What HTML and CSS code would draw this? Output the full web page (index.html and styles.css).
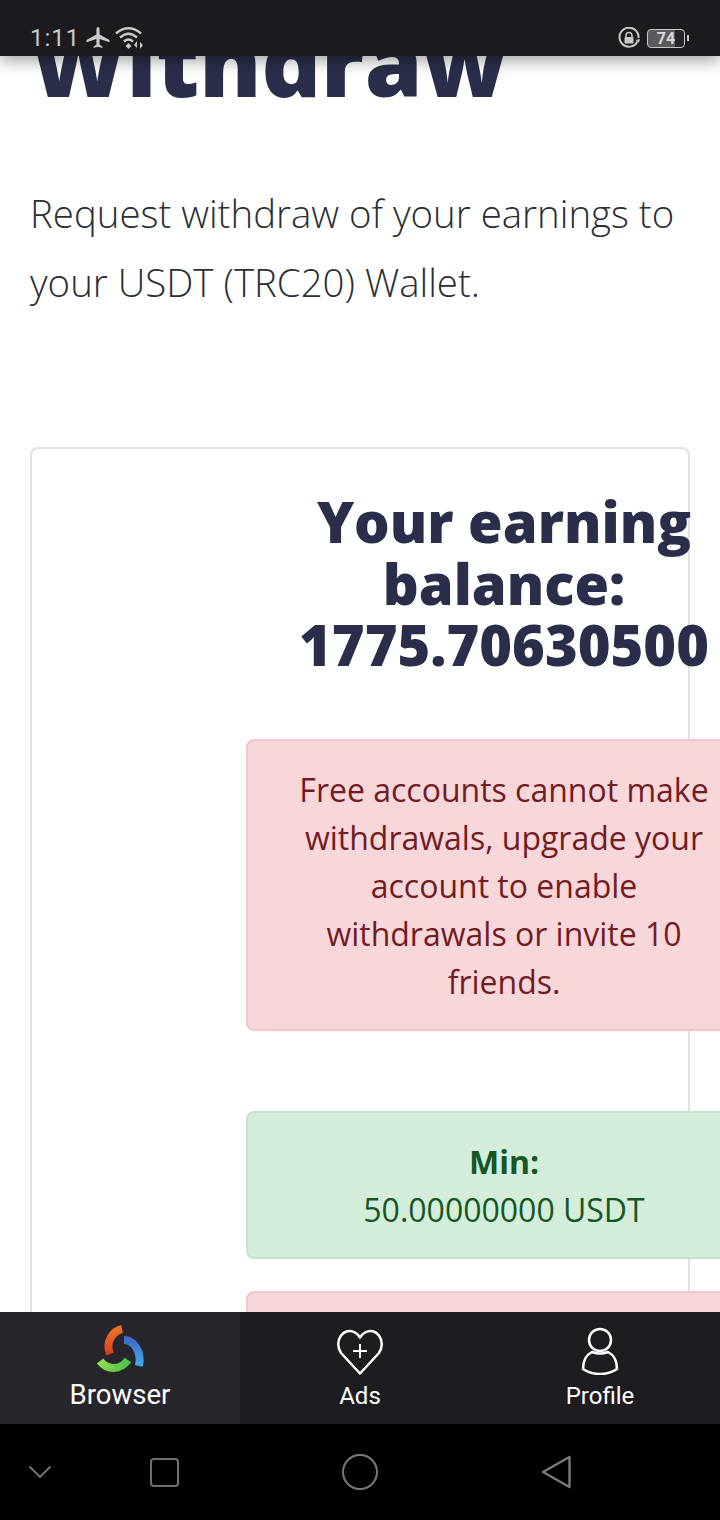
FILE: index.html
```html
<!DOCTYPE html>
<html lang="en">

<head>
    <meta charset="UTF-8">
    <meta name="viewport" content="width=device-width, initial-scale=1.0">
    <title>Withdraw</title>
    <link rel="stylesheet" href="styles.css">
</head>

<body>
    <div class="phone">
        <div class="statusbar">
            <div class="status-left">
                <span class="status-time">1:11</span>
                <svg class="icon-plane" width="24" height="22" viewBox="0 0 24 22">
                    <path d="M12 0c1 0 1.600 1.200 1.600 3v4.600L23.500 13v2.200l-9.900-3.100v5.400l2.800 2.200V21L12 19.800 7.600 21v-1.300l2.800-2.200v-5.400L.5 15.200V13l9.900-5.400V3C10.400 1.200 11 0 12 0z" fill="#c9c9c9"/>
                </svg>
                <svg class="icon-wifi" width="30" height="24" viewBox="0 0 30 24">
                    <path d="M1 7.500C8.500 .5 18.500 .5 26 7.500M5 11.500c5.500-5 11.500-5 17 0M9 15.500c3-2.700 6-2.700 9 0" fill="none" stroke="#c9c9c9" stroke-width="2.400"/>
                    <path d="M13.500 17l3 3-3 3-3-3z" fill="#c9c9c9"/>
                    <path d="M22 15v7l-3-3zM25 23v-7l3 3z" fill="#c9c9c9"/>
                </svg>
            </div>
            <div class="status-right">
                <svg class="icon-lock" width="22" height="22" viewBox="0 0 22 22">
                    <path d="M19.500 14.500A9.500 9.500 0 1 1 20.500 11" fill="none" stroke="#c9c9c9" stroke-width="2"/>
                    <path d="M17.500 13l3.500 2.500 1-3.500z" fill="#c9c9c9"/>
                    <path d="M8 10V8.500a3 3 0 0 1 6 0V10" fill="none" stroke="#c9c9c9" stroke-width="1.500"/>
                    <rect x="6.500" y="10" width="9" height="6.500" rx="1" fill="#c9c9c9"/>
                </svg>
                <div class="battery">
                    <div class="battery-body"><span class="battery-num">74</span></div>
                    <div class="battery-nub"></div>
                </div>
            </div>
        </div>

        <div class="webview">
            <h1 class="page-title">Withdraw</h1>
            <p class="page-lead">Request withdraw of your earnings to your USDT (TRC20) Wallet.</p>

            <div class="card">
                <div class="card-col">
                    <h3 class="balance">Your earning balance: 1775.70630500</h3>
                    <div class="alert alert-danger alert-notice">Free accounts cannot make withdrawals, upgrade your account to enable withdrawals or invite 10 friends.</div>
                    <div class="alert alert-success"><strong>Min:</strong><br>50.00000000 USDT</div>
                    <div class="alert alert-danger alert-empty"></div>
                </div>
            </div>
        </div>

        <div class="tabbar">
            <div class="tab tab-active">
                <svg width="52" height="52" viewBox="0 0 52 52">
                    <defs>
                        <linearGradient id="arcOrange" x1="0" y1="0" x2="0" y2="1">
                            <stop offset="0" stop-color="#f0702a"/>
                            <stop offset="1" stop-color="#d8401e"/>
                        </linearGradient>
                        <linearGradient id="arcBlue" x1="0" y1="0" x2="0" y2="1">
                            <stop offset="0" stop-color="#3f6fc8"/>
                            <stop offset="1" stop-color="#45a8e8"/>
                        </linearGradient>
                        <linearGradient id="arcGreen" x1="0" y1="0" x2="1" y2="0">
                            <stop offset="0" stop-color="#8edc50"/>
                            <stop offset="1" stop-color="#4cc04a"/>
                        </linearGradient>
                    </defs>
                    <path d="M28 6C19 8 11 19 16 31" fill="none" stroke="url(#arcOrange)" stroke-width="8"/>
                    <path d="M30 17C40 17 48 29 45 43" fill="none" stroke="url(#arcBlue)" stroke-width="8"/>
                    <path d="M6 38C13 47 26 48 34 37" fill="none" stroke="url(#arcGreen)" stroke-width="8"/>
                </svg>
                <span class="tab-label tab-label-big">Browser</span>
            </div>
            <div class="tab">
                <svg width="52" height="52" viewBox="0 0 52 52">
                    <path d="M26 50.500L7 30C-1 18 10 3 21 9.500c2.200 1.300 3.800 3 5 5 1.200-2 2.800-3.700 5-5C42 3 53 18 45 30z" fill="none" stroke="#fff" stroke-width="2.500" stroke-linejoin="round"/>
                    <path d="M26 21v14M19 28h14" fill="none" stroke="#fff" stroke-width="2"/>
                </svg>
                <span class="tab-label">Ads</span>
            </div>
            <div class="tab">
                <svg width="52" height="52" viewBox="0 0 52 52">
                    <circle cx="26" cy="17" r="11" fill="none" stroke="#fff" stroke-width="2.500"/>
                    <path d="M18 29C12 32 9 38 9 46c5 3.500 11 5 17 5s12-1.500 17-5c0-8-3-14-9-17-5 2-11 2-16 0z" fill="none" stroke="#fff" stroke-width="2.500" stroke-linejoin="round"/>
                </svg>
                <span class="tab-label">Profile</span>
            </div>
        </div>

        <div class="navkeys">
            <svg width="24" height="14" viewBox="0 0 24 14">
                <path d="M1.500 1.500L12 12 22.500 1.500" fill="none" stroke="#6f6f6f" stroke-width="2"/>
            </svg>
            <div class="key-square"></div>
            <div class="key-circle"></div>
            <svg width="32" height="36" viewBox="0 0 32 36">
                <path d="M29.500 3L3 18l26.500 15z" fill="none" stroke="#7a7a7a" stroke-width="2.400" stroke-linejoin="round"/>
            </svg>
        </div>
    </div>
</body>

</html>
```

FILE: styles.css
```css
html,
body {
    margin: 0;
    padding: 0;
    background-color: #000;
}

.phone {
    width: 720px;
    height: 1520px;
    display: flex;
    flex-direction: column;
    overflow: hidden;
    font-family: "Open Sans", sans-serif;
}

/* Status bar */
.statusbar {
    height: 56px;
    flex-shrink: 0;
    background-color: #1b1b20;
    display: flex;
    justify-content: space-between;
    align-items: center;
    padding: 20px 31px 0 30px;
    box-sizing: border-box;
    box-shadow: 0 4px 16px rgba(0, 0, 0, 0.4);
    position: relative;
    z-index: 2;
}

.status-left,
.status-right {
    display: flex;
    align-items: center;
}

.status-time {
    font-family: Roboto, sans-serif;
    font-size: 24px;
    letter-spacing: 1px;
    color: #c9c9c9;
}

.icon-plane {
    margin-left: 6px;
}

.icon-wifi {
    margin-left: 5px;
}

.battery {
    display: flex;
    align-items: center;
    margin-left: 7px;
}

.battery-body {
    width: 38px;
    height: 19px;
    box-sizing: border-box;
    border: 1px solid #c9c9c9;
    border-radius: 4px;
    background: linear-gradient(to right, #5a5a5a 74%, #26262a 74%);
    display: flex;
    justify-content: center;
    align-items: center;
}

.battery-num {
    font-family: Roboto, sans-serif;
    font-size: 16px;
    font-weight: 700;
    color: #d8d8d8;
}

.battery-nub {
    width: 2px;
    height: 6px;
    margin-left: 2px;
    background-color: #c9c9c9;
}

/* Page */
.webview {
    flex: 1;
    min-height: 0;
    overflow: hidden;
    background-color: #fff;
    padding: 0 30px;
}

.page-title {
    margin: -52px 0 0;
    font-size: 92.8px;
    line-height: 115px;
    font-weight: 800;
    color: #2a2e4a;
}

.page-lead {
    margin: 60px 0 0;
    font-size: 38.4px;
    line-height: 69px;
    font-weight: 300;
    color: #2b2f33;
}

.card {
    margin-top: 130px;
    width: 660px;
    box-sizing: border-box;
    border: 2px solid #e2e2e2;
    border-radius: 8px;
    padding: 42px 0 0 214px;
    height: 1000px;
}

.card-col {
    width: 516px;
}

.balance {
    margin: 0 0 63px;
    font-size: 56px;
    line-height: 61.6px;
    font-weight: 800;
    text-align: center;
    color: #2a2e4a;
}

.alert {
    font-size: 32px;
    line-height: 48px;
    text-align: center;
    padding: 25px 40px 23px;
    border: 2px solid transparent;
    border-radius: 8px;
    margin-bottom: 32px;
}

.alert-notice {
    margin-bottom: 80px;
}

.alert-empty {
    height: 96px;
}

.alert-danger {
    color: #721c24;
    background-color: #f8d7da;
    border-color: #f5c6cb;
}

.alert-success {
    color: #155724;
    background-color: #d4edda;
    border-color: #c3e6cb;
}

/* Tabs */
.tabbar {
    height: 112px;
    flex-shrink: 0;
    background-color: #1c1c21;
    display: flex;
    position: relative;
    z-index: 2;
}

.tab {
    flex: 1;
    display: flex;
    flex-direction: column;
    align-items: center;
    padding-top: 11px;
    box-sizing: border-box;
}

.tab-active {
    background-color: #26262c;
}

.tab-label {
    font-family: Roboto, sans-serif;
    font-size: 24px;
    line-height: 28px;
    color: #fff;
    margin-top: 7px;
}

.tab-label-big {
    font-size: 27.6px;
    margin-top: 6px;
}

/* Android nav keys */
.navkeys {
    height: 96px;
    flex-shrink: 0;
    background-color: #000;
    display: grid;
    grid-template-columns: 80px 168px 224px 168px 80px;
    justify-items: center;
    align-items: center;
}

.key-square {
    width: 29px;
    height: 29px;
    box-sizing: border-box;
    border: 2px solid #6f6f6f;
    border-radius: 4px;
}

.key-circle {
    width: 36px;
    height: 36px;
    box-sizing: border-box;
    border: 2px solid #7a7a7a;
    border-radius: 50%;
}
```
